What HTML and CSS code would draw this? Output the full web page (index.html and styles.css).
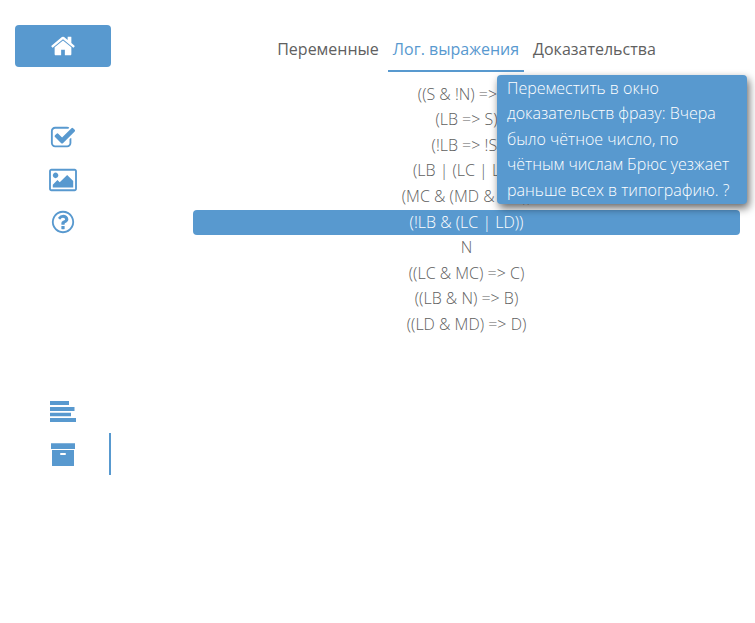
FILE: index.html
```html
<!DOCTYPE html>
<html lang="ru">
<head>
<meta charset="utf-8">
<meta name="viewport" content="width=device-width, initial-scale=1">
<title>Лог. выражения</title>
<link rel="stylesheet" href="styles.css">
</head>
<body>
<div class="layout">
  <nav class="sidebar">
    <a class="item home" href="#" aria-label="Home">
      <svg class="icon" viewBox="0 0 1792 1792"><path d="M1472 992v480q0 26-19 45t-45 19h-384v-384h-256v384h-384q-26 0-45-19t-19-45v-480q0-1 .5-3t.5-3l575-474 575 474q1 2 1 6zm223-69l-62 74q-8 9-21 11h-3q-13 0-21-7l-692-577-692 577q-12 8-24 7-13-2-21-11l-62-74q-8-10-7-23.500t11-21.500l719-599q32-26 76-26t76 26l244 204v-195q0-14 9-23t23-9h192q14 0 23 9t9 23v408l219 182q10 8 11 21.500t-7 23.500z"/></svg>
    </a>
    <div class="group">
      <a class="item" href="#" aria-label="Check">
        <svg class="icon" viewBox="0 0 1792 1792"><path d="M1472 930v318q0 119-84.500 203.500t-203.500 84.500h-832q-119 0-203.500-84.500t-84.500-203.500v-832q0-119 84.500-203.500t203.500-84.500h832q63 0 117 25 15 7 18 23 3 17-9 29l-49 49q-10 10-23 10-3 0-9-2-23-6-45-6h-832q-66 0-113 47t-47 113v832q0 66 47 113t113 47h832q66 0 113-47t47-113v-254q0-13 9-22l64-64q10-10 23-10 6 0 12 3 20 8 20 29zm231-489l-814 814q-24 24-57 24t-57-24l-430-430q-24-24-24-57t24-57l110-110q24-24 57-24t57 24l263 263 647-647q24-24 57-24t57 24l110 110q24 24 24 57t-24 57z"/></svg>
      </a>
      <a class="item" href="#" aria-label="Picture">
        <svg class="icon wide" viewBox="-64 0 1920 1792"><path d="M576 576q0 80-56 136t-136 56-136-56-56-136 56-136 136-56 136 56 56 136zm1024 384v448h-1408v-192l320-320 160 160 512-512zm96-704h-1600q-13 0-22.500 9.500t-9.500 22.500v1216q0 13 9.500 22.500t22.500 9.500h1600q13 0 22.500-9.500t9.500-22.500v-1216q0-13-9.500-22.500t-22.500-9.500zm160 32v1216q0 66-47 113t-113 47h-1600q-66 0-113-47t-47-113v-1216q0-66 47-113t113-47h1600q66 0 113 47t47 113z"/></svg>
      </a>
      <a class="item" href="#" aria-label="Help">
        <svg class="icon" viewBox="0 0 1792 1792"><path d="M1008 1200v160q0 14-9 23t-23 9h-160q-14 0-23-9t-9-23v-160q0-14 9-23t23-9h160q14 0 23 9t9 23zm256-496q0 50-15 90t-45.500 69-52 44-59.500 36q-32 18-46.500 28t-26 24-11.500 29v32q0 14-9 23t-23 9h-160q-14 0-23-9t-9-23v-68q0-35 10.500-64.500t24-47.500 39-35.500 41-25.500 44.500-21q53-25 75-43t22-49q0-42-43.500-71.500t-95.500-29.500q-56 0-95 27-29 20-80 83-9 12-25 12-11 0-19-6l-108-82q-10-7-12-20t5-23q122-192 349-192 129 0 238.500 89.500t109.500 214.500zm-368-448q-130 0-248.500 51t-204 136.500-136.500 204-51 248.500 51 248.500 136.500 204 204 136.500 248.500 51 248.500-51 204-136.500 136.500-204 51-248.500-51-248.500-136.500-204-204-136.500-248.500-51zm768 640q0 209-103 385.500t-279.500 279.500-385.500 103-385.500-103-279.500-279.500-103-385.500 103-385.500 279.500-279.500 385.500-103 385.500 103 279.500 279.500 103 385.500z"/></svg>
      </a>
    </div>
    <div class="group group-views">
      <a class="item" href="#" aria-label="Text">
        <svg class="icon" viewBox="0 0 26 26"><path d="M0 2h19v4H0zM0 8h24.500v4H0zM0 13.700h21v3.600H0zM0 19h26v4H0z"/></svg>
      </a>
      <a class="item current" href="#" aria-label="Archive">
        <svg class="icon" viewBox="0 0 26 26"><path fill-rule="evenodd" d="M1 2.300h24V8H1zM2 9h22v15.500q0 .5-.5.5h-21q-.5 0-.5-.5zM11 12q-1 0-1 1t1 1h4q1 0 1-1t-1-1z"/></svg>
      </a>
    </div>
  </nav>
  <main>
    <nav class="tabs">
      <a class="tab" href="#">Переменные</a>
      <a class="tab selected" href="#">Лог. выражения</a>
      <a class="tab" href="#">Доказательства</a>
    </nav>
    <ul class="expressions">
      <li>((S &amp; !N) =&gt; A)</li>
      <li>(LB =&gt; S)</li>
      <li>(!LB =&gt; !S)</li>
      <li>(LB | (LC | LD))</li>
      <li>(MC &amp; (MD &amp; MB))</li>
      <li class="active">(!LB &amp; (LC | LD))
        <div class="tooltip" role="tooltip">Переместить в окно доказательств фразу: Вчера было чётное число, по чётным числам Брюс уезжает раньше всех в типографию. ?</div>
      </li>
      <li>N</li>
      <li>((LC &amp; MC) =&gt; C)</li>
      <li>((LB &amp; N) =&gt; B)</li>
      <li>((LD &amp; MD) =&gt; D)</li>
    </ul>
  </main>
</div>
</body>
</html>
```
FILE: styles.css
```css
:root {
  --blue: #5899cf;
}

* {
  box-sizing: border-box;
}

body {
  margin: 0;
  padding: 25px 15px;
  background: #fff;
  color: #606060;
  font: 300 16px/1.6 "Open Sans", sans-serif;
}

a {
  color: inherit;
  text-decoration: none;
}

.layout {
  display: grid;
  grid-template-columns: 96px minmax(0, 1fr);
  column-gap: 82px;
}

.item {
  display: flex;
  align-items: center;
  justify-content: center;
  height: 42px;
  color: var(--blue);
}

.home {
  border-radius: 4px;
  background: var(--blue);
  color: #fff;
}

.icon {
  width: 26px;
  height: 26px;
  fill: currentColor;
}

.wide {
  width: 28px;
}

.group {
  margin-top: 50px;
}

.group-views {
  margin-top: 148px;
}

.current {
  position: relative;
}

.current::after {
  content: "";
  position: absolute;
  top: 0;
  right: 0;
  width: 2px;
  height: 100%;
  background: var(--blue);
}

.tabs {
  display: flex;
  justify-content: center;
  gap: 4px;
}

.tab {
  padding: 12px 5px 7px;
  border-bottom: 2px solid transparent;
  font-weight: 400;
}

.selected {
  border-color: var(--blue);
  color: var(--blue);
}

.expressions {
  margin: 10px 0 0;
  padding: 0;
  list-style: none;
  text-align: center;
}

.active {
  position: relative;
  border-radius: 4px;
  background: var(--blue);
  color: #fff;
}

.tooltip {
  position: absolute;
  right: -7px;
  bottom: calc(100% + 6px);
  width: 250px;
  padding: 1px 10px 0;
  border-radius: 4px;
  background: var(--blue);
  box-shadow: 2px 4px 8px rgba(0, 0, 0, 0.6);
  text-align: left;
}
```
